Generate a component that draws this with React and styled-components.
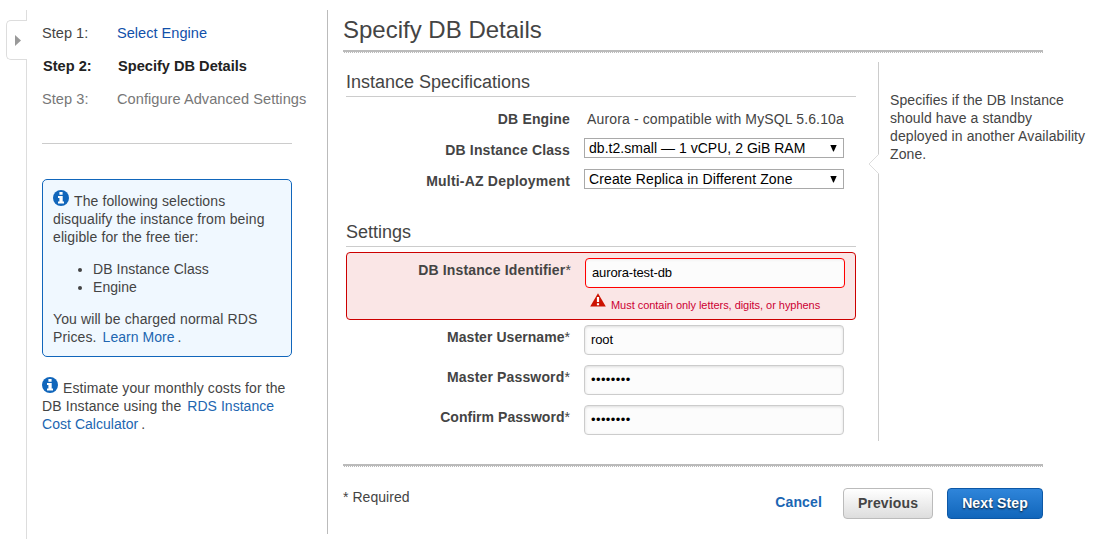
import React from 'react';
import styled, { createGlobalStyle, css } from 'styled-components';

const Global = createGlobalStyle`
  *, *::before, *::after { box-sizing: border-box; }
  html, body, #root { height: 100%; }
  body {
    margin: 0;
    overflow: hidden;
    background: #fff;
    color: #444;
    font: 14px/18px "Liberation Sans", Arial, sans-serif;
  }
`;

const Page = styled.div`
  display: flex;
  width: 1100px;
  height: 539px;
`;

const Gutter = styled.div`
  display: flex;
  flex-direction: column;
  width: 27px;
  padding: 10px 0 0 6px;
`;

const GutterLine = styled.div`
  ${(p) => (p.$height ? css`height: ${p.$height}px;` : css`flex: 1;`)}
  border-right: 1px solid #ddd;
`;

const DrawerTab = styled.button`
  display: flex;
  align-items: center;
  height: 40px;
  width: 21px;
  padding: 0 0 0 8px;
  border: 1px solid #ddd;
  border-right: 0;
  border-radius: 5px 0 0 5px;
  background: #fff;
`;

const Sidebar = styled.aside`
  width: 301px;
  height: 524px;
  margin-top: 10px;
  padding: 7px 0 0 15px;
  border-right: 1px solid #bbb;
`;

const Steps = styled.ol`
  margin: 0;
  padding: 0;
  list-style: none;
`;

const Step = styled.li`
  display: flex;
  height: 33px;
  padding-left: ${(p) => (p.$current ? 1 : 0)}px;
  font-size: 14.6px;
  line-height: 33px;
  letter-spacing: ${(p) => (p.$upcoming ? 0.04 : 0)}px;
  white-space: nowrap;
  color: ${(p) => (p.$current ? '#222' : p.$upcoming ? '#777' : '#444')};
  font-weight: ${(p) => (p.$current ? 700 : 400)};
`;

const StepNumber = styled.span`
  width: 75px;
`;

const StepLink = styled.a`
  color: #1150aa;
  text-decoration: none;
`;

const Link = styled.a`
  margin: 0 3px 0 2px;
  color: #2166b1;
  letter-spacing: 0.04px;
  text-decoration: none;
`;

const Rule = styled.hr`
  width: 250px;
  height: 1px;
  margin: 27px 0 35px;
  border: 0;
  background: #ccc;
`;

const copy = css`
  letter-spacing: 0.11px;
`;

const Notice = styled.section`
  ${copy}
  width: 250px;
  height: 178px;
  padding: 12px 10px 0;
  border: 1px solid #1166bb;
  border-radius: 5px;
  background: #f0f8ff;
  white-space: nowrap;
`;

const Paragraph = styled.p`
  margin: 0;
`;

const Bullets = styled.ul`
  margin: 14px 0;
  padding-left: 40px;
  letter-spacing: 0.04px;
`;

const Estimate = styled.p`
  ${copy}
  margin: 22px 0 0;
  white-space: nowrap;
`;

const InlineIcon = styled.svg`
  display: inline-block;
  width: 16px;
  height: 16px;
  margin: -4px 5px 0 0;
  vertical-align: 0;
`;

const Main = styled.main`
  width: 772px;
  padding: 10px 0 0 15px;
`;

const Title = styled.h1`
  height: 40px;
  margin: 0;
  font-size: 24px;
  font-weight: 400;
  line-height: 40px;
`;

const DoubleRule = styled.div`
  width: 700px;
  height: 3px;
  background:
    repeating-linear-gradient(90deg, #fff 0 1px, #bbb 1px 2px) 0 2px / 100% 1px no-repeat,
    linear-gradient(#bbb, #bbb) 0 0 / 100% 2px no-repeat;
`;

const Content = styled.div`
  display: flex;
  height: 411px;
  padding: 9px 0 0 3px;
`;

const Form = styled.form`
  width: 510px;
  margin-right: 22px;
`;

const SectionTitle = styled.h2`
  height: 28px;
  margin: ${(p) => p.$top}px 0 0;
  border-bottom: 1px solid #ccc;
  font-size: 18px;
  font-weight: 400;
  line-height: 26px;
`;

const SpecRow = styled.div`
  display: flex;
  height: 31px;
`;

const Label = styled.label`
  width: 224px;
  margin-right: 14px;
  padding-top: ${(p) => p.$top}px;
  text-align: right;
  font-weight: 700;
  letter-spacing: ${(p) => p.$spacing ?? 0.15}px;
  white-space: nowrap;
`;

const Star = styled.span`
  font-weight: 400;
`;

const EngineText = styled.span`
  padding: 13px 0 0 3px;
  letter-spacing: 0.14px;
  white-space: nowrap;
`;

const SelectBox = styled.div`
  display: flex;
  align-items: center;
  justify-content: space-between;
  width: 260px;
  height: 20px;
  margin-top: 10px;
  padding: 0 6px 0 4px;
  border: 1px solid #a9a9a9;
  background: #fff;
  color: #000;
  letter-spacing: ${(p) => p.$spacing}px;
  white-space: nowrap;
`;

const ErrorPanel = styled.div`
  display: flex;
  height: 68px;
  margin: 5px 0;
  padding-top: 5px;
  border: 1px solid #cc0000;
  border-radius: 4px;
  background: #fae6e6;
`;

const FieldRow = styled.div`
  display: flex;
  height: 40px;
`;

const Input = styled.input`
  display: block;
  width: 260px;
  height: 30px;
  padding: 0 6px 2px;
  border: 1px solid ${(p) => (p.$invalid ? '#ff0000' : '#ccc')};
  border-radius: 4px;
  outline: 0;
  background: #fcfcfc;
  box-shadow: ${(p) =>
    p.$invalid ? 'inset 0 1px 3px rgba(0, 0, 0, 0.06)' : 'inset 0 1px 3px rgba(0, 0, 0, 0.13)'};
  color: #000;
  font: 13px "Liberation Sans", Arial, sans-serif;
  letter-spacing: ${(p) => (p.type === 'password' ? 0.4 : -0.13)}px;
`;

const ErrorMessage = styled.div`
  display: flex;
  padding: 5px 0 0 5px;
  color: #cc0033;
  font-size: 11px;
  letter-spacing: -0.04px;
  white-space: nowrap;
`;

const ErrorText = styled.span`
  padding: 3px 0 0 5px;
`;

const Help = styled.aside`
  letter-spacing: 0.1px;
  position: relative;
  width: 222px;
  height: 379px;
  padding: 29px 0 0 11px;
  border-left: 1px solid #ccc;
  white-space: nowrap;
`;

const Pointer = styled.svg`
  position: absolute;
  left: -11px;
  top: 91px;
`;

const Footer = styled.footer`
  display: flex;
  width: 700px;
  padding-top: 21px;
`;

const Required = styled.span`
  flex: 1;
  letter-spacing: 0.04px;
`;

const Cancel = styled.a`
  margin: 5px 21px 0 0;
  color: #1a66b3;
  font-weight: 700;
  letter-spacing: 0.15px;
`;

const Button = styled.button`
  width: ${(p) => p.$width}px;
  height: 31px;
  margin-left: ${(p) => (p.$primary ? 14 : 0)}px;
  padding: 0 0 2px;
  border: 1px solid ${(p) => (p.$primary ? '#0d58a6' : '#bbb')};
  border-radius: 4px;
  background: ${(p) =>
    p.$primary ? 'linear-gradient(#2f85da, #1166bb)' : 'linear-gradient(#fff, #ddd)'};
  color: ${(p) => (p.$primary ? '#fff' : '#444')};
  text-shadow: ${(p) => (p.$primary ? '0 1px 2px rgba(0, 0, 0, 0.8)' : 'none')};
  font: 700 14px "Liberation Sans", Arial, sans-serif;
  letter-spacing: 0.13px;
`;

const InfoIcon = () => (
  <InlineIcon viewBox="0 0 16 16">
    <circle cx="8" cy="8" r="8" fill="#1166bb" />
    <path d="M6.4 2.1h3.2v2.7H6.4zM5 6h4.7v5.4H11v2H5v-2h1.4V8H5z" fill="#fff" />
  </InlineIcon>
);

const WarningIcon = () => (
  <svg width="16" height="14" viewBox="0 0 16 14">
    <path d="M8 0.3 15.8 13.5H0.2z" fill="#cc1100" />
    <path d="M6.9 4h2.2v5H6.9zM6.9 10.2h2.2v2H6.9z" fill="#fff" />
  </svg>
);

const Select = ({ children, spacing }) => (
  <SelectBox role="combobox" $spacing={spacing}>
    {children}
    <svg width="7" height="7" viewBox="0 0 7 7">
      <path d="M0.3 0h6.4L3.8 6.6h-.6z" fill="#000" />
    </svg>
  </SelectBox>
);

const fields = [
  { label: 'Master Username', value: 'root', type: 'text', spacing: 0.05 },
  { label: 'Master Password', value: 'password', type: 'password', spacing: 0.15 },
  { label: 'Confirm Password', value: 'password', type: 'password', spacing: 0.04 },
];

export default function App() {
  return (
    <>
      <Global />
      <Page>
        <Gutter>
          <GutterLine $height={10} />
          <DrawerTab aria-label="Open panel">
            <svg width="6" height="11" viewBox="0 0 6 11">
              <path d="M0 0 6 5.5 0 11z" fill="#999" />
            </svg>
          </DrawerTab>
          <GutterLine />
        </Gutter>

        <Sidebar>
          <Steps>
            <Step>
              <StepNumber>Step 1:</StepNumber>
              <StepLink>Select Engine</StepLink>
            </Step>
            <Step $current>
              <StepNumber>Step 2:</StepNumber>
              <span>Specify DB Details</span>
            </Step>
            <Step $upcoming>
              <StepNumber>Step 3:</StepNumber>
              <span>Configure Advanced Settings</span>
            </Step>
          </Steps>
          <Rule />
          <Notice>
            <Paragraph>
              <InfoIcon />The following selections<br />
              disqualify the instance from being<br />
              eligible for the free tier:
            </Paragraph>
            <Bullets>
              <li>DB Instance Class</li>
              <li>Engine</li>
            </Bullets>
            <Paragraph>
              You will be charged normal RDS<br />
              Prices. <Link>Learn More</Link>.
            </Paragraph>
          </Notice>
          <Estimate>
            <InfoIcon />Estimate your monthly costs for the<br />
            DB Instance using the <Link>RDS Instance<br />
            Cost Calculator</Link>.
          </Estimate>
        </Sidebar>

        <Main>
          <Title>Specify DB Details</Title>
          <DoubleRule />
          <Content>
            <Form>
              <SectionTitle $top={7}>Instance Specifications</SectionTitle>
              <SpecRow>
                <Label $top={13}>DB Engine</Label>
                <EngineText>Aurora - compatible with MySQL 5.6.10a</EngineText>
              </SpecRow>
              <SpecRow>
                <Label $top={13}>DB Instance Class</Label>
                <Select spacing={0.03}>db.t2.small — 1 vCPU, 2 GiB RAM</Select>
              </SpecRow>
              <SpecRow>
                <Label $top={13} $spacing={0.2}>Multi-AZ Deployment</Label>
                <Select spacing={0.12}>Create Replica in Different Zone</Select>
              </SpecRow>
              <SectionTitle $top={29}>Settings</SectionTitle>
              <ErrorPanel>
                <Label $top={3}>DB Instance Identifier<Star>*</Star></Label>
                <div>
                  <Input $invalid defaultValue="aurora-test-db" />
                  <ErrorMessage>
                    <WarningIcon />
                    <ErrorText>Must contain only letters, digits, or hyphens</ErrorText>
                  </ErrorMessage>
                </div>
              </ErrorPanel>
              {fields.map((f) => (
                <FieldRow key={f.label}>
                  <Label $top={3} $spacing={f.spacing}>{f.label}<Star>*</Star></Label>
                  <Input type={f.type} defaultValue={f.value} />
                </FieldRow>
              ))}
            </Form>
            <Help>
              <Pointer width="11" height="22" viewBox="0 0 11 22">
                <path d="M11 1 1 11l10 10z" fill="#fff" />
                <path d="M11 1 1 11l10 10" fill="none" stroke="#ddd" />
              </Pointer>
              Specifies if the DB Instance<br />
              should have a standby<br />
              deployed in another Availability<br />
              Zone.
            </Help>
          </Content>
          <DoubleRule />
          <Footer>
            <Required>* Required</Required>
            <Cancel>Cancel</Cancel>
            <Button $width={90}>Previous</Button>
            <Button $primary $width={96}>Next Step</Button>
          </Footer>
        </Main>
      </Page>
    </>
  );
}
